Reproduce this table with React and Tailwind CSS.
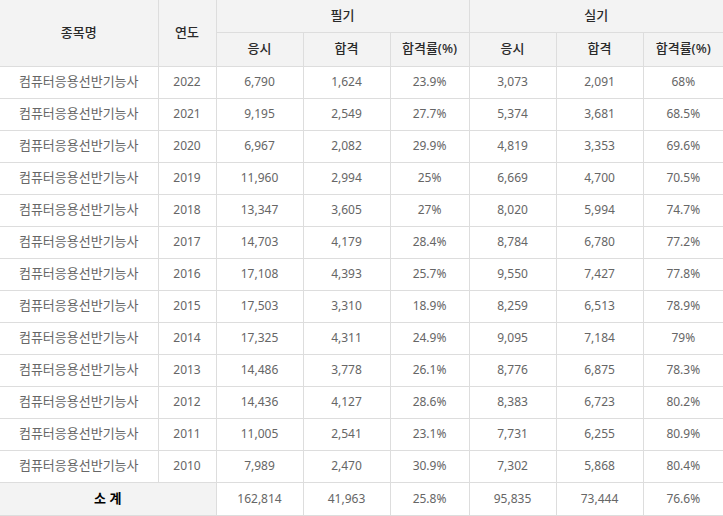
import React from "react";

const rows = [
  ["2022", "6,790", "1,624", "23.9%", "3,073", "2,091", "68%"],
  ["2021", "9,195", "2,549", "27.7%", "5,374", "3,681", "68.5%"],
  ["2020", "6,967", "2,082", "29.9%", "4,819", "3,353", "69.6%"],
  ["2019", "11,960", "2,994", "25%", "6,669", "4,700", "70.5%"],
  ["2018", "13,347", "3,605", "27%", "8,020", "5,994", "74.7%"],
  ["2017", "14,703", "4,179", "28.4%", "8,784", "6,780", "77.2%"],
  ["2016", "17,108", "4,393", "25.7%", "9,550", "7,427", "77.8%"],
  ["2015", "17,503", "3,310", "18.9%", "8,259", "6,513", "78.9%"],
  ["2014", "17,325", "4,311", "24.9%", "9,095", "7,184", "79%"],
  ["2013", "14,486", "3,778", "26.1%", "8,776", "6,875", "78.3%"],
  ["2012", "14,436", "4,127", "28.6%", "8,383", "6,723", "80.2%"],
  ["2011", "11,005", "2,541", "23.1%", "7,731", "6,255", "80.9%"],
  ["2010", "7,989", "2,470", "30.9%", "7,302", "5,868", "80.4%"],
];

const total = ["162,814", "41,963", "25.8%", "95,835", "73,444", "76.6%"];

const widths = [158, 58, 87, 87, 79, 87, 87, 80];

export default function App() {
  const th = "border-b border-r border-[#dddddd] bg-[#f3f3f3] text-[13px] font-medium text-[#2a2a2a]";
  const td = "h-[32px] border-b border-r border-[#dddddd] text-[#666666]";

  return (
    <div className="w-[723px] bg-white" style={{ fontFamily: '"Noto Sans", "Noto Sans CJK KR", sans-serif' }}>
      <table className="w-[723px] table-fixed border-collapse text-center text-[12px]">
        <colgroup>
          {widths.map((w, i) => (
            <col key={i} style={{ width: w }} />
          ))}
        </colgroup>
        <thead>
          <tr>
            <th rowSpan={2} className={th}>종목명</th>
            <th rowSpan={2} className={th}>연도</th>
            <th colSpan={3} className={`${th} h-[32px]`}>필기</th>
            <th colSpan={3} className={`${th} h-[32px] border-r-0`}>실기</th>
          </tr>
          <tr>
            <th className={`${th} h-[34px]`}>응시</th>
            <th className={th}>합격</th>
            <th className={th}>합격률(%)</th>
            <th className={th}>응시</th>
            <th className={th}>합격</th>
            <th className={`${th} border-r-0`}>합격률(%)</th>
          </tr>
        </thead>
        <tbody>
          {rows.map((r) => (
            <tr key={r[0]}>
              <td className={`${td} text-[13px]`}>컴퓨터응용선반기능사</td>
              {r.map((v, i) => (
                <td key={i} className={`${td} ${i === 6 ? "border-r-0" : ""}`}>
                  {v}
                </td>
              ))}
            </tr>
          ))}
          <tr>
            <td colSpan={2} className="h-[33px] border-b border-r border-[#dddddd] bg-[#f3f3f3] text-[13px] font-bold text-black">
              소 계
            </td>
            {total.map((v, i) => (
              <td key={i} className={`h-[33px] border-b border-r border-[#dddddd] text-[#666666] ${i === 5 ? "border-r-0" : ""}`}>
                {v}
              </td>
            ))}
          </tr>
        </tbody>
      </table>
    </div>
  );
}
